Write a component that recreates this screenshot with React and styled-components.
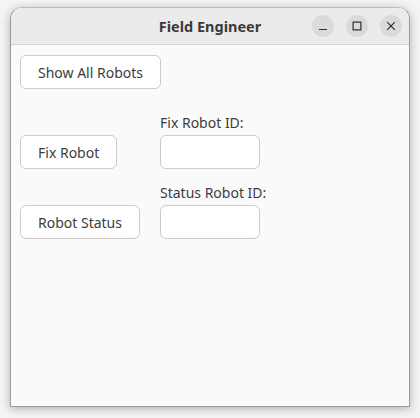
import React, { useState } from "react";
import styled, { createGlobalStyle } from "styled-components";

const GlobalStyle = createGlobalStyle`
  html, body {
    margin: 0;
    padding: 0;
    background: #f4f4f4;
  }
  body {
    font-family: "Noto Sans", "Open Sans", sans-serif;
    color: #3d3d3d;
  }
`;

const FieldEngineer = () => {
  const [fixId, setFixId] = useState("");
  const [statusId, setStatusId] = useState("");

  return (
    <>
      <GlobalStyle />
      <Screen>
        <Window>
          <TitleBar>
            <Title>Field Engineer</Title>
            <Controls>
              <ControlButton aria-label="minimize">
                <svg width="10" height="10" viewBox="0 0 10 10">
                  <path d="M1 8.5h8" stroke="#2e2e2e" strokeWidth="1.2" />
                </svg>
              </ControlButton>
              <ControlButton aria-label="maximize">
                <svg width="10" height="10" viewBox="0 0 10 10">
                  <rect x="1.1" y="1.1" width="7.8" height="7.8" fill="none" stroke="#2e2e2e" strokeWidth="1.2" />
                </svg>
              </ControlButton>
              <ControlButton aria-label="close">
                <svg width="10" height="10" viewBox="0 0 10 10">
                  <path d="M1.2 1.2l7.6 7.6M8.8 1.2l-7.6 7.6" stroke="#2e2e2e" strokeWidth="1.2" />
                </svg>
              </ControlButton>
            </Controls>
          </TitleBar>
          <Content>
            <TopRow>
              <Button>Show All Robots</Button>
            </TopRow>
            <Grid>
              <Cell>
                <Button>Fix Robot</Button>
              </Cell>
              <Field>
                <Label>Fix Robot ID:</Label>
                <Entry value={fixId} onChange={(e) => setFixId(e.target.value)} />
              </Field>
              <Cell>
                <Button>Robot Status</Button>
              </Cell>
              <Field>
                <Label>Status Robot ID:</Label>
                <Entry value={statusId} onChange={(e) => setStatusId(e.target.value)} />
              </Field>
            </Grid>
          </Content>
        </Window>
      </Screen>
    </>
  );
};

export default FieldEngineer;

//* styled-components
const Screen = styled.div`
  width: 420px;
  height: 418px;
  padding: 7px 10px 0 10px;
  box-sizing: border-box;
  overflow: hidden;
`;

const Window = styled.div`
  display: flex;
  flex-direction: column;
  width: 400px;
  height: 400px;
  box-sizing: border-box;
  border: 1px solid #9c9c9c;
  border-top-color: #bdbdbd;
  border-radius: 12px 12px 0 0;
  background: #fafafa;
  box-shadow: 0 2px 10px rgba(0, 0, 0, 0.28);
  overflow: hidden;
`;

const TitleBar = styled.div`
  position: relative;
  display: flex;
  align-items: center;
  justify-content: center;
  height: 36px;
  flex-shrink: 0;
  background: #ebebeb;
  border-bottom: 1px solid #d2d2d2;
`;

const Title = styled.div`
  font-weight: 700;
  font-size: 14.5px;
  color: #3a3a3a;
`;

const Controls = styled.div`
  position: absolute;
  right: 7px;
  top: 7px;
  display: flex;
  gap: 12px;
`;

const ControlButton = styled.div`
  display: flex;
  align-items: center;
  justify-content: center;
  width: 22px;
  height: 22px;
  border-radius: 50%;
  background: #dadada;
`;

const Content = styled.div`
  display: flex;
  flex-direction: column;
  gap: 24px;
  padding: 10px 9px;
`;

const TopRow = styled.div`
  display: flex;
`;

const Grid = styled.div`
  display: grid;
  grid-template-columns: 140px auto;
  justify-content: start;
  row-gap: 14px;
`;

const Cell = styled.div`
  display: flex;
  align-items: flex-end;
`;

const Field = styled.div`
  display: flex;
  flex-direction: column;
  gap: 2px;
`;

const Label = styled.div`
  font-size: 14px;
  line-height: 20px;
  white-space: nowrap;
  color: #3d3d3d;
`;

const Button = styled.button`
  height: 34px;
  padding: 0 17px;
  white-space: nowrap;
  border: 1px solid #cfcac6;
  border-radius: 6px;
  background: #ffffff;
  color: #3d3d3d;
  font-family: "Noto Sans", "Open Sans", sans-serif;
  font-size: 14px;
  outline: none;
`;

const Entry = styled.input`
  width: 100px;
  height: 34px;
  box-sizing: border-box;
  border: 1px solid #cfcac6;
  border-radius: 6px;
  background: #ffffff;
  padding: 0 8px;
  font-family: "Noto Sans", sans-serif;
  font-size: 14px;
  outline: none;
`;
